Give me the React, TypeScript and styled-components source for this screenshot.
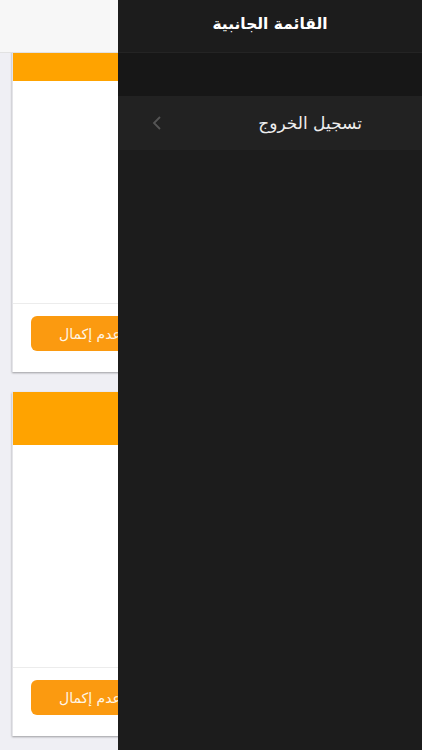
import styled, { createGlobalStyle } from 'styled-components';

const GlobalStyle = createGlobalStyle`
  html, body, #root {
    height: 100%;
  }

  body {
    margin: 0;
    font-family: 'DejaVu Sans', 'Noto Sans', sans-serif;
    background: #efeff4;
    overflow: hidden;
  }
`;

const Screen = styled.div`
  position: relative;
  width: 422px;
  height: 750px;
  overflow: hidden;
  display: flex;
  flex-direction: column;
  background: #efeff4;
`;

const TopBar = styled.header`
  flex: 0 0 53px;
  background: #f7f7f7;
  border-bottom: 1px solid #e2e2e2;
  box-sizing: border-box;
  position: relative;
  z-index: 1;
`;

const Viewport = styled.div`
  flex: 1;
  overflow: hidden;
`;

// Scrolled state: the first card is partly under the top bar.
const CardList = styled.div`
  margin-top: -45px;
  padding: 20px 12px;
  display: flex;
  flex-direction: column;
  gap: 20px;
`;

const Card = styled.section`
  background: #fff;
  border-left: 1px solid #e4e4e8;
  box-shadow: 0 1px 2px rgba(0, 0, 0, 0.35);
  display: flex;
  flex-direction: column;
`;

const CardHead = styled.div`
  height: 53px;
  background: #ffa300;
`;

const CardBody = styled.div`
  height: 222px;
  border-bottom: 1px solid #ececec;
`;

const CardFoot = styled.div`
  height: 68px;
  padding: 12px 18px 0;
  box-sizing: border-box;
  display: flex;
  justify-content: flex-start;
`;

const ActionButton = styled.button`
  height: 35px;
  padding: 0 28px;
  border: none;
  border-radius: 6px;
  background: #fb9a10;
  color: #fff6e6;
  font-family: 'DejaVu Sans', sans-serif;
  font-size: 14px;
  direction: rtl;
  white-space: nowrap;
`;

const Drawer = styled.aside`
  position: absolute;
  top: 0;
  left: 118px;
  z-index: 2;
  width: 304px;
  height: 100%;
  background: #1c1c1c;
  display: flex;
  flex-direction: column;
  direction: rtl;
`;

const DrawerHead = styled.div`
  height: 53px;
  border-bottom: 1px solid #242424;
  box-sizing: border-box;
  display: flex;
  align-items: center;
  justify-content: center;
  color: #fff;
  font-size: 15.5px;
  font-weight: bold;
  padding-bottom: 4px;
`;

const Spacer = styled.div`
  height: 43px;
  background: #171717;
`;

const MenuItem = styled.div`
  height: 54px;
  box-sizing: border-box;
  background: #222;
  display: flex;
  align-items: center;
  justify-content: space-between;
  padding: 0 60px 0 34px;
  color: #eee;
  font-size: 17px;
  white-space: nowrap;
`;

const Chevron = styled.svg`
  width: 10px;
  height: 16px;
  flex: none;
`;

function JobCard() {
  return (
    <Card>
      <CardHead />
      <CardBody />
      <CardFoot>
        <ActionButton>عدم إكمال</ActionButton>
      </CardFoot>
    </Card>
  );
}

export default function App() {
  return (
    <>
      <GlobalStyle />
      <Screen>
        <TopBar />
        <Viewport>
          <CardList>
            <JobCard />
            <JobCard />
          </CardList>
        </Viewport>
        <Drawer>
          <DrawerHead>القائمة الجانبية</DrawerHead>
          <Spacer />
          <MenuItem>
            <span>تسجيل الخروج</span>
            <Chevron viewBox="0 0 10 16">
              <path d="M8 2 L2 8 L8 14" fill="none" stroke="#555" strokeWidth="1.8" />
            </Chevron>
          </MenuItem>
        </Drawer>
      </Screen>
    </>
  );
}
